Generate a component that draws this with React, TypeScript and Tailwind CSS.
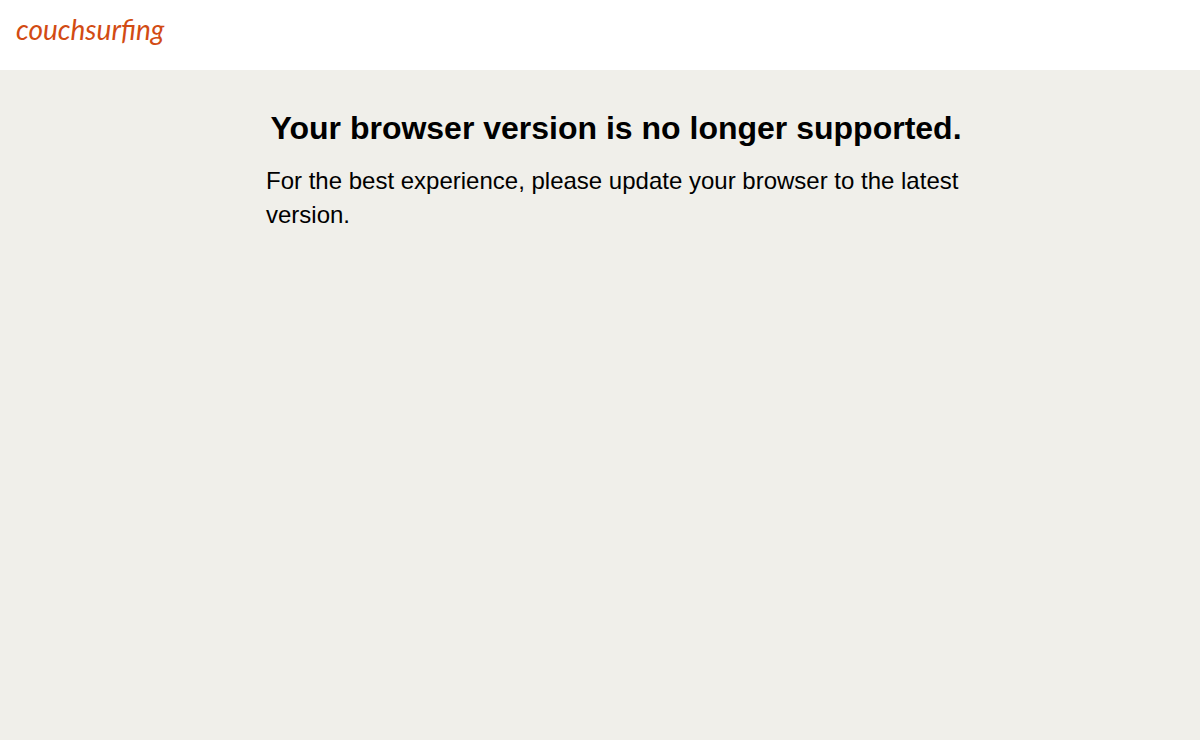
import React from 'react';

const Header: React.FC = () => (
  <header className="bg-white px-4 pt-3 pb-6">
    <a
      href="/"
      className="block w-fit font-[Lato,'Open_Sans',sans-serif] text-[28px] leading-[34px] italic text-[#d24b13]"
    >
      couchsurfing
    </a>
  </header>
);

const App: React.FC = () => {
  return (
    <div className="flex min-h-screen flex-col bg-[#f0efea] font-['Liberation_Sans',Arial,sans-serif] text-black">
      <Header />
      <main className="mx-auto w-full max-w-[732px] pt-10 pl-8">
        <h1 className="text-center text-[32px] leading-9 font-bold">
          Your browser version is no longer supported.
        </h1>
        <p className="mt-[18px] text-2xl leading-[34px]">
          For the best experience, please update your browser to the latest version.
        </p>
      </main>
    </div>
  );
};

export default App;
